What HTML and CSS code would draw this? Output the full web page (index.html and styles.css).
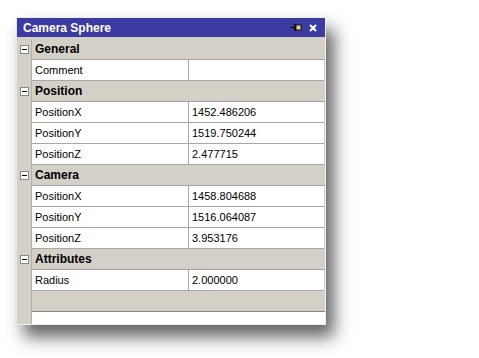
FILE: index.html
```html
<!DOCTYPE html>
<html lang="en">
<head>
<title>Camera Sphere</title>
<link rel="stylesheet" href="styles.css">
</head>
<body>
<div class="panel">
<div class="titlebar">
<span class="title">Camera Sphere</span>
<span class="tools">
<svg class="pin" width="12" height="9" viewBox="0 0 12 9">
<path d="M0 4.5h4" stroke="#101020" stroke-width="1.2"/>
<rect x="4" y="1" width="2" height="7" fill="#101020"/>
<rect x="6" y="2" width="5" height="5" fill="#e8d870" stroke="#101020" stroke-width="1"/>
</svg>
<svg class="close" width="8" height="8" viewBox="0 0 8 8">
<path d="M1 1l6 6M7 1l-6 6" stroke="#fff" stroke-width="2"/>
</svg>
</span>
</div>
<div class="grid">
<div class="row cat"><span class="gut"><i class="minus"></i></span><span class="label">General</span></div>
<div class="row prop"><span class="gut"></span><span class="name">Comment</span><span class="value"></span></div>

<div class="row cat"><span class="gut"><i class="minus"></i></span><span class="label">Position</span></div>
<div class="row prop"><span class="gut"></span><span class="name">PositionX</span><span class="value">1452.486206</span></div>
<div class="row prop"><span class="gut"></span><span class="name">PositionY</span><span class="value">1519.750244</span></div>
<div class="row prop"><span class="gut"></span><span class="name">PositionZ</span><span class="value">2.477715</span></div>

<div class="row cat"><span class="gut"><i class="minus"></i></span><span class="label">Camera</span></div>
<div class="row prop"><span class="gut"></span><span class="name">PositionX</span><span class="value">1458.804688</span></div>
<div class="row prop"><span class="gut"></span><span class="name">PositionY</span><span class="value">1516.064087</span></div>
<div class="row prop"><span class="gut"></span><span class="name">PositionZ</span><span class="value">3.953176</span></div>

<div class="row cat"><span class="gut"><i class="minus"></i></span><span class="label">Attributes</span></div>
<div class="row prop"><span class="gut"></span><span class="name">Radius</span><span class="value">2.000000</span></div>

<div class="row cat empty"><span class="gut"></span><span class="label"></span></div>
<div class="row foot"><span class="gut"></span><span class="blank"></span></div>
</div>
</div>
</body>
</html>
```

FILE: styles.css
```css
html, body {
  margin: 0;
  padding: 0;
  background: #ffffff;
}
body {
  font-family: "Liberation Sans", Arial, sans-serif;
  font-size: 11px;
  color: #000;
  min-height: 358px;
  padding-top: 17px;
  box-sizing: border-box;
}
.panel {
  margin-left: 16px;
  width: 310px;
  box-sizing: border-box;
  border: 1px solid #eeeeee;
  border-left-color: #e4e4e4;
  background: #d4d0c8;
  box-shadow: 8px 12px 16px rgba(0, 0, 0, 0.62);
}
.titlebar {
  height: 19px;
  background: #3b3ba2;
  display: flex;
  align-items: center;
  justify-content: space-between;
  padding: 0 8px 0 6px;
  border-bottom: 2px solid #d4d0c8;
}
.title {
  color: #fff;
  font-weight: bold;
  font-size: 12px;
}
.tools {
  display: flex;
  align-items: center;
  gap: 7px;
}
.pin, .close {
  display: block;
}
.row {
  display: grid;
  grid-template-columns: 15px 157px 1fr;
  height: 21px;
}
.gut {
  display: flex;
  align-items: center;
  justify-content: center;
  background: #d4d0c8;
  border-right: 1px solid #b4b0a8;
}
.minus {
  display: block;
  width: 7px;
  height: 7px;
  border: 1px solid #8a8a8a;
  background: #fff;
  position: relative;
}
.minus::after {
  content: "";
  position: absolute;
  left: 1px;
  top: 3px;
  width: 5px;
  height: 1px;
  background: #000;
}
.cat .label {
  grid-column: 2 / 4;
  background: #d4d0c8;
  border-bottom: 1px solid #a8a49c;
  font-weight: bold;
  font-size: 12px;
  line-height: 20px;
  padding-left: 3px;
}
.prop .name, .prop .value {
  background: #fff;
  border-bottom: 1px solid #a8a8a8;
  line-height: 20px;
  padding-left: 3px;
  white-space: nowrap;
}
.prop .name {
  border-right: 1px solid #a8a8a8;
}
.prop .value {
  margin-right: 1px;
}
.empty .label {
  border-bottom-color: #8c8880;
}
.foot {
  height: 12px;
}
.foot .blank {
  grid-column: 2 / 4;
  background: #fff;
}
```
